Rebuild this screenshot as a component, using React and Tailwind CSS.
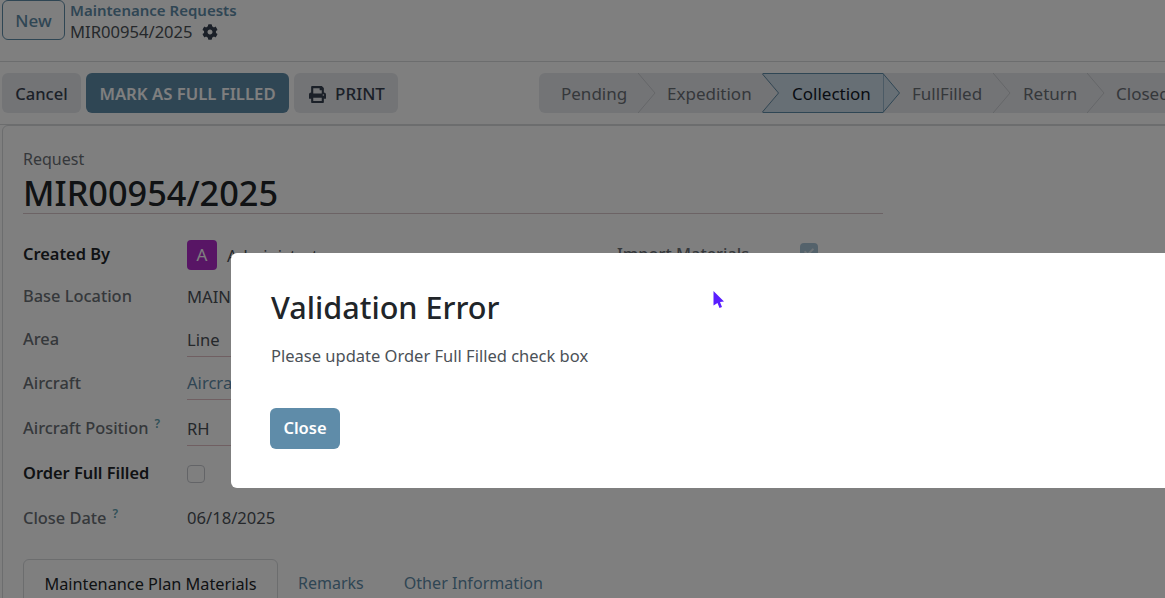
import React from 'react';
import { FaCog, FaPrint, FaCheck } from 'react-icons/fa';

const stages = [
  { name: 'Pending', width: 'w-[99px]', pad: 'pl-[22px]' },
  { name: 'Expedition', width: 'w-[124px]', pad: 'pl-[29px]' },
  { name: 'Collection', width: 'w-[121px]', pad: 'pl-[30px]', active: true },
  { name: 'FullFilled', width: 'w-[110px]', pad: 'pl-[29px]' },
  { name: 'Return', width: 'w-[94px]', pad: 'pl-[30px]' },
  { name: 'Closed', width: 'w-[90px]', pad: 'pl-[29px]', last: true },
];

const Stage = ({ stage }) => (
  <div
    className={`relative flex h-10 shrink-0 items-center pt-px ${stage.width} ${stage.pad} text-[17px] ${
      stage.active ? 'bg-[#cfdfea] text-[#111827]' : 'bg-[#e7e9ed] text-[#6b7076]'
    }`}
  >
    {stage.name}
    {!stage.last && (
      <svg className="absolute left-full top-0 z-10" width="18" height="40" viewBox="0 0 18 40">
        {stage.active ? (
          <path d="M0 0.5 L16.5 20 L0 39.5 Z" fill="#cfdfea" stroke="#5f8ca9" />
        ) : (
          <path d="M0 0 L17 20 L0 40" fill="#e7e9ed" stroke="#c9ccd1" />
        )}
      </svg>
    )}
    {stage.active && (
      <>
        <svg className="absolute left-0 top-0 z-10" width="18" height="40" viewBox="0 0 18 40">
          <path d="M0 0 L17 20 L0 40 Z" fill="#e7e9ed" />
          <path d="M0 0.5 L16.5 20 L0 39.5" fill="none" stroke="#5f8ca9" />
        </svg>
        <div className="absolute inset-x-0 top-0 h-px bg-[#5f8ca9]" />
        <div className="absolute inset-x-0 bottom-0 h-px bg-[#5f8ca9]" />
      </>
    )}
  </div>
);

const Row = ({ label, bold, hint, height, children }) => (
  <div className={`flex items-center ${height}`}>
    <div className={`w-[164px] shrink-0 pb-1 text-[16.4px] ${bold ? 'font-semibold text-[#212529]' : 'font-medium text-[#6b7076]'}`}>
      {label}
      {hint && <sup className="ml-[6px] text-[12px] font-semibold text-[#5f9fb0]">?</sup>}
    </div>
    {children}
  </div>
);

const Value = ({ children, underline, tone = 'text-[#4b5157]' }) => (
  <div className={`flex h-[30px] w-[340px] items-center border-b pb-[2px] text-[16.6px] ${tone} ${underline ? 'border-[#e0bfc4]' : 'border-transparent'}`}>
    {children}
  </div>
);

export default function App() {
  return (
    <div className="relative h-[598px] w-[1165px] overflow-hidden bg-white font-['Noto_Sans',sans-serif]">
      {/* control panel */}
      <div className="flex h-[62px] items-start gap-[5px] border-b border-[#d8dadd] px-[2px]">
        <button className="flex h-10 w-[63px] items-center justify-center rounded-md border border-[#5f8ca9] pt-[2px] text-[17px] font-medium text-[#5f8ca9]">
          New
        </button>
        <div className="flex flex-col leading-[21px]">
          <span className="text-[15px] font-semibold text-[#5f8ca9]">Maintenance Requests</span>
          <span className="flex items-center gap-[9px] text-[16.6px] text-[#4b5157]">
            MIR00954/2025
            <FaCog className="text-[16px] text-[#374151]" />
          </span>
        </div>
      </div>

      {/* status bar */}
      <div className="flex h-[63px] items-center justify-between border-b border-[#d8dadd] pl-[2px]">
        <div className="flex gap-[5px]">
          <button className="flex h-10 w-[79px] items-center justify-center rounded-md bg-[#e7e9ed] pt-[2px] text-[16.5px] font-medium text-[#374151]">
            Cancel
          </button>
          <button className="flex h-10 w-[203px] items-center justify-center rounded-md bg-[#5f8ca9] pt-[2px] text-[16.7px] font-semibold text-white">
            MARK AS FULL FILLED
          </button>
          <button className="flex h-10 w-[104px] items-center justify-center gap-[9px] rounded-md bg-[#e7e9ed] pl-[2px] pt-[2px] text-[17px] font-medium text-[#374151]">
            <FaPrint className="text-[17px]" />
            PRINT
          </button>
        </div>
        <div className="isolate flex w-[626px] shrink-0 overflow-hidden rounded-l-md">
          {stages.map((stage) => (
            <Stage key={stage.name} stage={stage} />
          ))}
        </div>
      </div>

      {/* form sheet */}
      <div className="ml-[2px] h-[480px] w-[1200px] rounded-md border border-[#d8dadd] bg-white pl-5 pt-[21px]">
        <div className="text-[16px] leading-[24px] text-[#6b7076]">Request</div>
        <div className="w-[860px] border-b border-[#d9c7ca] pt-[2px] text-[34.3px] font-medium leading-[40px] text-[#212529]">
          MIR00954/2025
        </div>
        <div className="flex pt-[21px]">
          <div className="flex flex-col">
            <Row label="Created By" bold height="h-[42px]">
              <div className="flex w-[430px] items-center">
                <div className="mb-[2px] mr-[10px] flex h-[30px] w-[30px] items-center justify-center rounded bg-[#b02bcb] text-[17px] text-white">A</div>
                <span className="text-[16.6px] text-[#4b5157]">Administrator</span>
              </div>
              <div className="flex items-center">
                <span className="w-[183px] pb-[3px] text-[16.4px] font-medium text-[#6b7076]">Import Materials</span>
                <span className="mb-[8px] flex h-[18px] w-[18px] items-center justify-center rounded bg-[#a9c4d6] text-[10px] text-white/60">
                  <FaCheck />
                </span>
              </div>
            </Row>
            <Row label="Base Location" height="h-[43px]"><Value>MAIN BASE</Value></Row>
            <Row label="Area" height="h-[43px]"><Value underline>Line</Value></Row>
            <Row label="Aircraft" height="h-[44px]"><Value underline tone="text-[#5f8ca9]">Aircraft</Value></Row>
            <Row label="Aircraft Position" hint height="h-[47px]"><Value underline>RH</Value></Row>
            <Row label="Order Full Filled" bold height="h-[43px]">
              <span className="mb-[3px] h-[18px] w-[18px] rounded border border-[#c6c9ce] bg-white" />
            </Row>
            <Row label="Close Date" hint height="h-[46px]"><Value>06/18/2025</Value></Row>
          </div>
        </div>

        {/* tabs */}
        <div className="mt-4 flex items-start text-[16.3px]">
          <div className="flex h-[50px] w-[255px] items-start justify-center rounded-t-md border border-[#d8dadd] pt-[12px] text-[#212529]">
            Maintenance Plan Materials
          </div>
          <div className="px-5 pt-[12px] text-[16px] text-[#5f8ca9]">Remarks</div>
          <div className="px-5 pt-[12px] text-[16.1px] text-[#5f8ca9]">Other Information</div>
        </div>
      </div>

      {/* modal */}
      <div className="absolute inset-0 bg-black/50 pl-[231px] pt-[253px]">
        <div className="relative h-[235px] w-[1000px] rounded-md bg-white pl-10 pt-[31px]">
          <div className="text-[30.6px] font-medium leading-[46px] text-[#212529]">Validation Error</div>
          <p className="mt-[14px] text-[16.5px] leading-6 text-[#4b5157]">Please update Order Full Filled check box</p>
          <button className="ml-[-1px] mt-[40px] flex h-[41px] w-[70px] items-center justify-center rounded-md bg-[#5f8ca9] text-[16.5px] font-semibold text-white">
            Close
          </button>
          <svg className="absolute left-[482px] top-[38px]" width="12" height="18" viewBox="0 0 12 18">
            <path d="M0.5 0 L11 10.5 L7 11 L9 16 L6.5 17 L4.5 12 L0.5 14.5 Z" fill="#5a1eff" />
          </svg>
        </div>
      </div>
    </div>
  );
}
